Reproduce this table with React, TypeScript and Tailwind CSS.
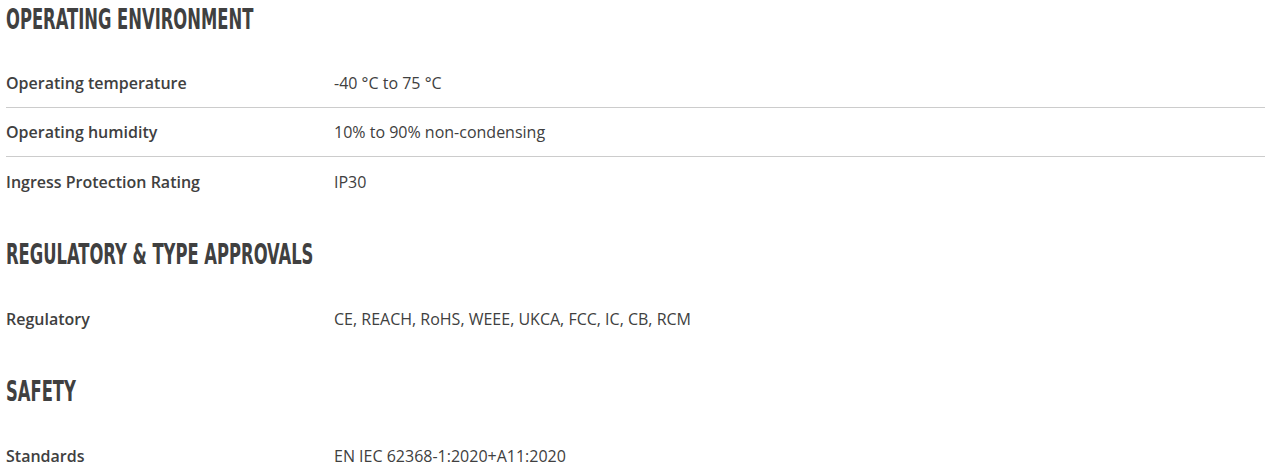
const sections: { title: string; rows: [string, string][] }[] = [
  {
    title: "OPERATING ENVIRONMENT",
    rows: [
      ["Operating temperature", "-40 °C to 75 °C"],
      ["Operating humidity", "10% to 90% non-condensing"],
      ["Ingress Protection Rating", "IP30"],
    ],
  },
  {
    title: "REGULATORY & TYPE APPROVALS",
    rows: [["Regulatory", "CE, REACH, RoHS, WEEE, UKCA, FCC, IC, CB, RCM"]],
  },
  {
    title: "SAFETY",
    rows: [["Standards", "EN IEC 62368-1:2020+A11:2020"]],
  },
];

export default function App() {
  return (
    <div className="flex flex-col gap-[29px] bg-white px-[6px] text-[#404040] font-['Open_Sans',sans-serif]">
      {sections.map((s) => (
        <section key={s.title}>
          {/* no Oswald offline: squeeze the condensed DejaVu to the same width */}
          <h2 className="h-10 leading-10 whitespace-nowrap">
            <span className="inline-block origin-left scale-x-[0.65] text-[28px] font-bold text-[#404040] font-['DejaVu_Sans_Condensed',sans-serif]">
              {s.title}
            </span>
          </h2>
          <div className="mt-[19px]">
            {s.rows.map(([label, value], i) => (
              <div
                key={label}
                className={
                  "grid h-[49px] grid-cols-[328px_1fr] items-center text-[16px] " +
                  (i < s.rows.length - 1 ? "border-b border-[#cccccc]" : "")
                }
              >
                <span className="font-semibold">{label}</span>
                <span>{value}</span>
              </div>
            ))}
          </div>
        </section>
      ))}
    </div>
  );
}
